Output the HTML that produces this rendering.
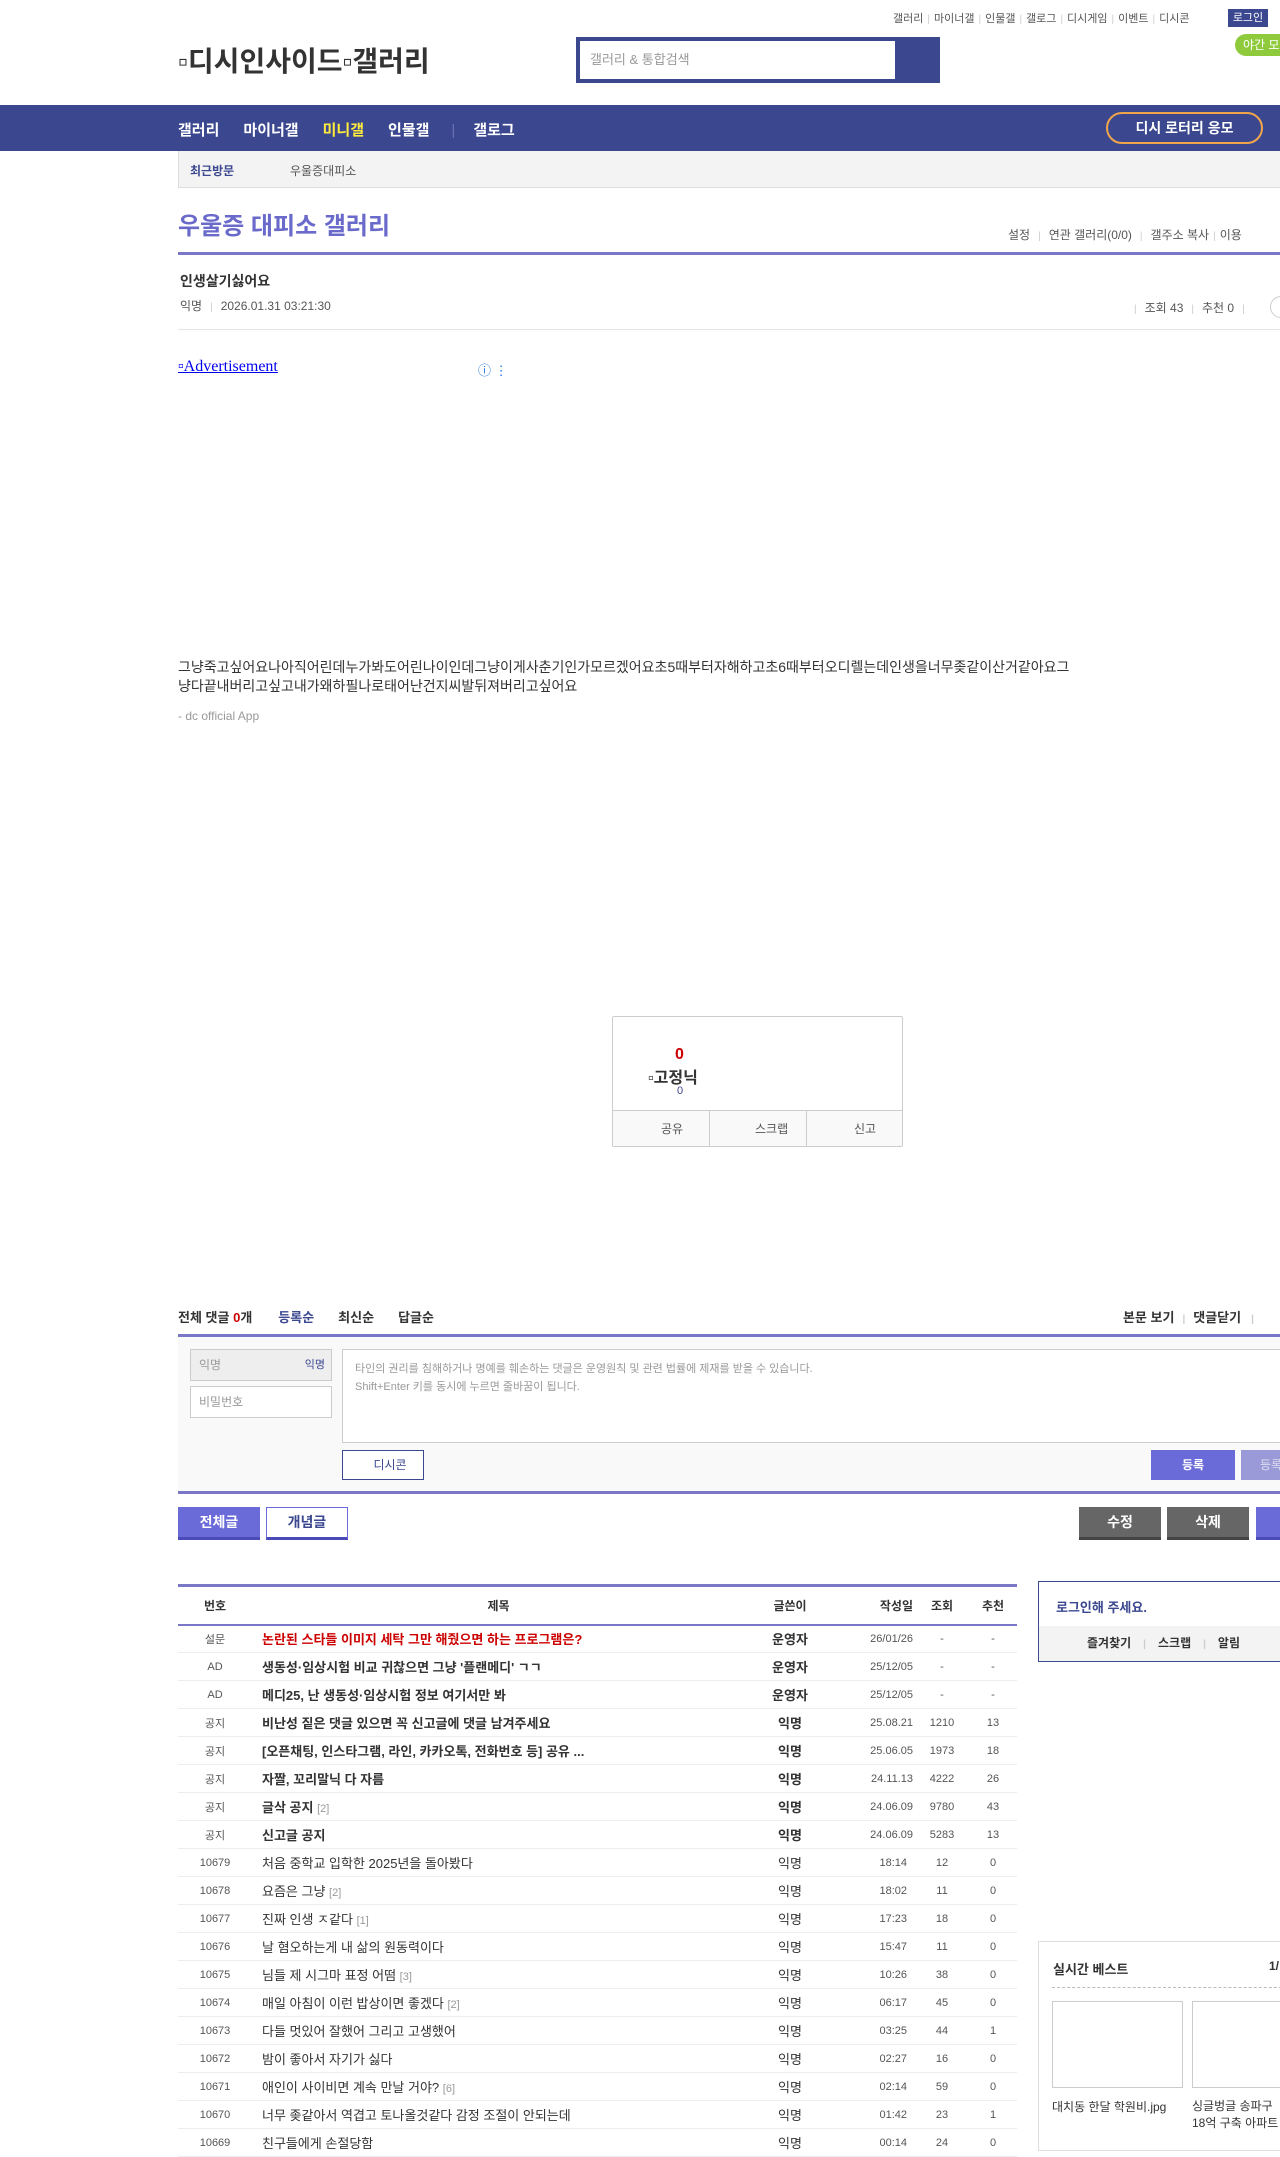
<!DOCTYPE html>
<html><head><meta charset="utf-8"><style>
*{margin:0;padding:0;box-sizing:border-box}
body{width:1280px;height:2147px;overflow:hidden;position:relative;background:#fff;font-family:"Liberation Sans","Noto Sans CJK KR",sans-serif;color:#333;font-size:12px}
.a{position:absolute;white-space:nowrap}
.top a{color:#555;font-size:11px}
.sep{color:#ccc;margin:0 4px;font-size:10px}
table{border-collapse:collapse;table-layout:fixed}
.lst{position:absolute;left:178px;top:1584px;width:839px;border-top:3px solid #7a78c6}
.lst td{height:28px;border-bottom:1px solid #eee;font-size:13px;text-align:center;color:#333;white-space:nowrap;overflow:hidden}
.lst th{height:39px;font-size:12px;border-bottom:2px solid #7a78c6;font-weight:bold;color:#333}
.lst td.t{text-align:left;padding-left:10px}
.lst td.n{font-size:11px;color:#555}
.lst td.d{font-size:11px;color:#555}
.lst td.r,.lst th.r{text-align:right;padding-right:2px}
.b{font-weight:bold}
.cnt{color:#999;font-size:11px}
</style></head><body>
<div class="a top" style="left:893px;top:10px">
<a>갤러리</a><span class="sep">|</span><a>마이너갤</a><span class="sep">|</span><a>인물갤</a><span class="sep">|</span><a>갤로그</a><span class="sep">|</span><a>디시게임</a><span class="sep">|</span><a>이벤트</a><span class="sep">|</span><a>디시콘</a></div>
<div class="a" style="left:1228px;top:9px;width:40px;height:18px;background:#3b4890;color:#fff;font-size:11px;text-align:center;line-height:18px">로그인</div>
<div class="a" style="left:1235px;top:34px;width:60px;height:22px;background:#8fca3c;color:#fff;font-size:12px;line-height:22px;padding-left:8px;border-radius:11px 0 0 11px">야간 모드</div>
<div class="a" style="left:178px;top:40px;font-size:28px;font-weight:bold;color:#333">▫디시인사이드▫갤러리</div>
<div class="a" style="left:576px;top:37px;width:364px;height:46px;background:#3b4890"></div>
<div class="a" style="left:580px;top:41px;width:315px;height:38px;background:#fff;color:#999;font-size:13px;line-height:38px;padding-left:10px">갤러리 &amp; 통합검색</div>
<div class="a" style="left:0;top:105px;width:1280px;height:46px;background:#3b4890"></div>
<div class="a" style="left:178px;top:119px;font-size:15px;font-weight:bold;color:#fff">갤러리<span style="margin-left:24px">마이너갤</span><span style="margin-left:24px;color:#ffeb3b">미니갤</span><span style="margin-left:24px">인물갤</span><span style="margin-left:22px;color:#6a74b0;font-weight:normal">|</span><span style="margin-left:18px">갤로그</span></div>
<div class="a" style="left:1106px;top:112px;width:157px;height:32px;border:2px solid #f0a54a;border-radius:16px;color:#fff;font-size:14px;font-weight:bold;text-align:center;line-height:28px">디시 로터리 응모</div>
<div class="a" style="left:178px;top:151px;width:1102px;height:37px;background:#f3f3f3;border-bottom:1px solid #ddd;border-left:1px solid #ddd"></div>
<div class="a" style="left:190px;top:162px;font-size:12px;font-weight:bold;color:#3b4890">최근방문</div>
<div class="a" style="left:290px;top:162px;font-size:12px;color:#555">우울증대피소</div>
<div class="a" style="left:178px;top:206px;font-size:24px;font-weight:bold;color:#6a6acb">우울증 대피소 갤러리</div>
<div class="a" style="left:1008px;top:226px;font-size:12px;color:#555">설정<span class="sep" style="margin:0 8px">|</span>연관 갤러리(0/0)<span class="sep" style="margin:0 8px">|</span>갤주소 복사<span class="sep">|</span>이용</div>
<div class="a" style="left:178px;top:252px;width:1102px;height:3px;background:#7a78c6"></div>
<div class="a" style="left:180px;top:271px;font-size:14px;font-weight:bold;color:#333">인생살기싫어요</div>
<div class="a" style="left:180px;top:297px;font-size:12px;color:#555">익명<span class="sep" style="margin:0 8px">|</span>2026.01.31 03:21:30</div>
<div class="a" style="left:1134px;top:299px;font-size:12px;color:#555"><span class="sep" style="margin:0 8px 0 0">|</span>조회 43<span class="sep" style="margin:0 8px">|</span>추천 0<span class="sep" style="margin:0 8px">|</span></div>
<div class="a" style="left:1270px;top:296px;width:22px;height:22px;border:1px solid #ccc;border-radius:11px"></div>
<div class="a" style="left:178px;top:329px;width:1102px;height:1px;background:#e5e5e5"></div>
<div class="a" style="left:178px;top:358px;font-size:16px;font-family:'Liberation Serif',serif;color:#00e;text-decoration:underline">▫Advertisement</div>
<div class="a" style="left:478px;top:360px;font-size:13px;color:#1a73e8">ⓘ ⋮</div>
<div class="a" style="left:178px;top:658px;font-size:14px;color:#333;line-height:19px">그냥죽고싶어요나아직어린데누가봐도어린나이인데그냥이게사춘기인가모르겠어요초5때부터자해하고초6때부터오디렐는데인생을너무좆같이산거같아요그<br>냥다끝내버리고싶고내가왜하필나로태어난건지씨발뒤져버리고싶어요</div>
<div class="a" style="left:178px;top:709px;font-size:12px;color:#999">- dc official App</div>
<div class="a" style="left:612px;top:1016px;width:291px;height:131px;border:1px solid #ccc;border-radius:2px"></div>
<div class="a" style="left:675px;top:1046px;font-size:16px;font-weight:bold;color:#c00">0</div>
<div class="a" style="left:648px;top:1064px;font-size:16px;font-weight:bold;color:#333">▫고정닉</div>
<div class="a" style="left:677px;top:1085px;font-size:11px;color:#3b4890">0</div>
<div class="a" style="left:613px;top:1110px;width:289px;height:36px;background:#f9f9f9;border-top:1px solid #ccc;font-size:12px;color:#555;line-height:36px">
<span style="position:absolute;left:48px">공유</span><span style="position:absolute;left:96px;top:0;height:36px;border-left:1px solid #ccc"></span><span style="position:absolute;left:142px">스크랩</span><span style="position:absolute;left:193px;top:0;height:36px;border-left:1px solid #ccc"></span><span style="position:absolute;left:241px">신고</span></div>
<div class="a" style="left:178px;top:1307px;font-size:13px;font-weight:bold;color:#333">전체 댓글 <span style="color:#c00">0</span>개<span style="color:#3b4890;margin-left:26px">등록순</span><span style="margin-left:24px">최신순</span><span style="margin-left:24px">답글순</span></div>
<div class="a" style="left:1123px;top:1307px;font-size:13px;font-weight:bold;color:#333">본문 보기<span class="sep" style="margin:0 8px">|</span>댓글닫기<span class="sep" style="margin-left:10px">|</span></div>
<div class="a" style="left:178px;top:1334px;width:1102px;height:160px;background:#f9f9f9;border-top:3px solid #7a78c6;border-bottom:3px solid #7a78c6"></div>
<div class="a" style="left:190px;top:1349px;width:142px;height:32px;background:#eee;border:1px solid #ccc;font-size:12px;color:#999;line-height:30px;padding-left:8px">익명<span style="position:absolute;right:6px;color:#3b4890;font-size:11px">익명</span></div>
<div class="a" style="left:190px;top:1386px;width:142px;height:32px;background:#fff;border:1px solid #ccc;font-size:12px;color:#999;line-height:30px;padding-left:8px">비밀번호</div>
<div class="a" style="left:342px;top:1349px;width:950px;height:94px;background:#fff;border:1px solid #ccc;font-size:11px;color:#999;line-height:18px;padding:10px 12px">타인의 권리를 침해하거나 명예를 훼손하는 댓글은 운영원칙 및 관련 법률에 제재를 받을 수 있습니다.<br>Shift+Enter 키를 동시에 누르면 줄바꿈이 됩니다.</div>
<div class="a" style="left:342px;top:1450px;width:82px;height:30px;background:#fff;border:1px solid #3b4890;font-size:12px;color:#3b4890;text-align:center;line-height:28px;padding-left:14px">디시콘</div>
<div class="a" style="left:1151px;top:1450px;width:84px;height:30px;background:#6a6ad8;color:#fff;font-size:12px;font-weight:bold;text-align:center;line-height:30px">등록</div>
<div class="a" style="left:1241px;top:1450px;width:60px;height:30px;background:#9a9ad8;color:#dde;font-size:12px;text-align:center;line-height:30px">등록</div>
<div class="a" style="left:178px;top:1507px;width:82px;height:33px;background:#6a6ad8;border-bottom:3px solid #4a4ab8;color:#fff;font-size:14px;font-weight:bold;text-align:center;line-height:31px">전체글</div>
<div class="a" style="left:266px;top:1507px;width:82px;height:33px;background:#fff;border:1px solid #6a6ad8;border-bottom:3px solid #4a4ab8;color:#3b4890;font-size:14px;font-weight:bold;text-align:center;line-height:29px">개념글</div>
<div class="a" style="left:1079px;top:1507px;width:82px;height:33px;background:#666;border-bottom:3px solid #444;color:#fff;font-size:14px;font-weight:bold;text-align:center;line-height:31px">수정</div>
<div class="a" style="left:1167px;top:1507px;width:82px;height:33px;background:#666;border-bottom:3px solid #444;color:#fff;font-size:14px;font-weight:bold;text-align:center;line-height:31px">삭제</div>
<div class="a" style="left:1256px;top:1507px;width:40px;height:33px;background:#6a6ad8;border-bottom:3px solid #4a4ab8"></div>
<table class="lst">
<colgroup><col style="width:74px"><col style="width:493px"><col style="width:90px"><col style="width:80px"><col style="width:54px"><col style="width:48px"></colgroup>
<tr><th>번호</th><th>제목</th><th>글쓴이</th><th class="r">작성일</th><th>조회</th><th>추천</th></tr>
<tr><td class="n">설문</td><td class="t b" style="color:#c00">논란된 스타들 이미지 세탁 그만 해줬으면 하는 프로그램은?</td><td class="b">운영자</td><td class="d r">26/01/26</td><td class="d">-</td><td class="d">-</td></tr>
<tr><td class="n">AD</td><td class="t b">생동성·임상시험 비교 귀찮으면 그냥 '플랜메디' ㄱㄱ</td><td class="b">운영자</td><td class="d r">25/12/05</td><td class="d">-</td><td class="d">-</td></tr>
<tr><td class="n">AD</td><td class="t b">메디25, 난 생동성·임상시험 정보 여기서만 봐</td><td class="b">운영자</td><td class="d r">25/12/05</td><td class="d">-</td><td class="d">-</td></tr>
<tr><td class="n">공지</td><td class="t b">비난성 짙은 댓글 있으면 꼭 신고글에 댓글 남겨주세요</td><td class="b">익명</td><td class="d r">25.08.21</td><td class="d">1210</td><td class="d">13</td></tr>
<tr><td class="n">공지</td><td class="t b">[오픈채팅, 인스타그램, 라인, 카카오톡, 전화번호 등] 공유 ...</td><td class="b">익명</td><td class="d r">25.06.05</td><td class="d">1973</td><td class="d">18</td></tr>
<tr><td class="n">공지</td><td class="t b">자짤, 꼬리말닉 다 자름</td><td class="b">익명</td><td class="d r">24.11.13</td><td class="d">4222</td><td class="d">26</td></tr>
<tr><td class="n">공지</td><td class="t"><b>글삭 공지</b> <span class="cnt">[2]</span></td><td class="b">익명</td><td class="d r">24.06.09</td><td class="d">9780</td><td class="d">43</td></tr>
<tr><td class="n">공지</td><td class="t b">신고글 공지</td><td class="b">익명</td><td class="d r">24.06.09</td><td class="d">5283</td><td class="d">13</td></tr>
<tr><td class="n">10679</td><td class="t">처음 중학교 입학한 2025년을 돌아봤다</td><td>익명</td><td class="d r" style="padding-right:8px">18:14</td><td class="d">12</td><td class="d">0</td></tr>
<tr><td class="n">10678</td><td class="t">요즘은 그냥 <span class="cnt">[2]</span></td><td>익명</td><td class="d r" style="padding-right:8px">18:02</td><td class="d">11</td><td class="d">0</td></tr>
<tr><td class="n">10677</td><td class="t">진짜 인생 ㅈ같다 <span class="cnt">[1]</span></td><td>익명</td><td class="d r" style="padding-right:8px">17:23</td><td class="d">18</td><td class="d">0</td></tr>
<tr><td class="n">10676</td><td class="t">날 혐오하는게 내 삶의 원동력이다</td><td>익명</td><td class="d r" style="padding-right:8px">15:47</td><td class="d">11</td><td class="d">0</td></tr>
<tr><td class="n">10675</td><td class="t">님들 제 시그마 표정 어떰 <span class="cnt">[3]</span></td><td>익명</td><td class="d r" style="padding-right:8px">10:26</td><td class="d">38</td><td class="d">0</td></tr>
<tr><td class="n">10674</td><td class="t">매일 아침이 이런 밥상이면 좋겠다 <span class="cnt">[2]</span></td><td>익명</td><td class="d r" style="padding-right:8px">06:17</td><td class="d">45</td><td class="d">0</td></tr>
<tr><td class="n">10673</td><td class="t">다들 멋있어 잘했어 그리고 고생했어</td><td>익명</td><td class="d r" style="padding-right:8px">03:25</td><td class="d">44</td><td class="d">1</td></tr>
<tr><td class="n">10672</td><td class="t">밤이 좋아서 자기가 싫다</td><td>익명</td><td class="d r" style="padding-right:8px">02:27</td><td class="d">16</td><td class="d">0</td></tr>
<tr><td class="n">10671</td><td class="t">애인이 사이비면 계속 만날 거야? <span class="cnt">[6]</span></td><td>익명</td><td class="d r" style="padding-right:8px">02:14</td><td class="d">59</td><td class="d">0</td></tr>
<tr><td class="n">10670</td><td class="t">너무 좆같아서 역겹고 토나올것같다 감정 조절이 안되는데</td><td>익명</td><td class="d r" style="padding-right:8px">01:42</td><td class="d">23</td><td class="d">1</td></tr>
<tr><td class="n">10669</td><td class="t">친구들에게 손절당함</td><td>익명</td><td class="d r" style="padding-right:8px">00:14</td><td class="d">24</td><td class="d">0</td></tr>
</table>
<div class="a" style="left:1038px;top:1581px;width:250px;height:81px;border:1px solid #3b4890;border-width:1px 0 2px 1px"></div>
<div class="a" style="left:1056px;top:1597px;font-size:13px;font-weight:bold;color:#3b4890">로그인해 주세요.</div>
<div class="a" style="left:1039px;top:1626px;width:245px;height:35px;background:#f3f3f3;font-size:12px;font-weight:bold;color:#333;line-height:35px;padding-left:48px">즐겨찾기<span class="sep" style="margin:0 12px">|</span>스크랩<span class="sep" style="margin:0 12px">|</span>알림</div>
<div class="a" style="left:1038px;top:1941px;width:250px;height:210px;border:1px solid #ddd"></div>
<div class="a" style="left:1053px;top:1959px;font-size:13px;font-weight:bold;color:#333">실시간 베스트</div>
<div class="a" style="left:1269px;top:1959px;font-size:12px;font-weight:bold;color:#333">1/</div>
<div class="a" style="left:1052px;top:1987px;width:240px;border-top:1px dashed #bbb"></div>
<div class="a" style="left:1052px;top:2001px;width:131px;height:87px;border:1px solid #ccc"></div>
<div class="a" style="left:1192px;top:2001px;width:110px;height:87px;border:1px solid #ccc"></div>
<div class="a" style="left:1052px;top:2098px;font-size:12px;color:#333">대치동 한달 학원비.jpg</div>
<div class="a" style="left:1192px;top:2098px;font-size:12px;color:#333;line-height:17px">싱글벙글 송파구<br>18억 구축 아파트</div>
</body></html>
